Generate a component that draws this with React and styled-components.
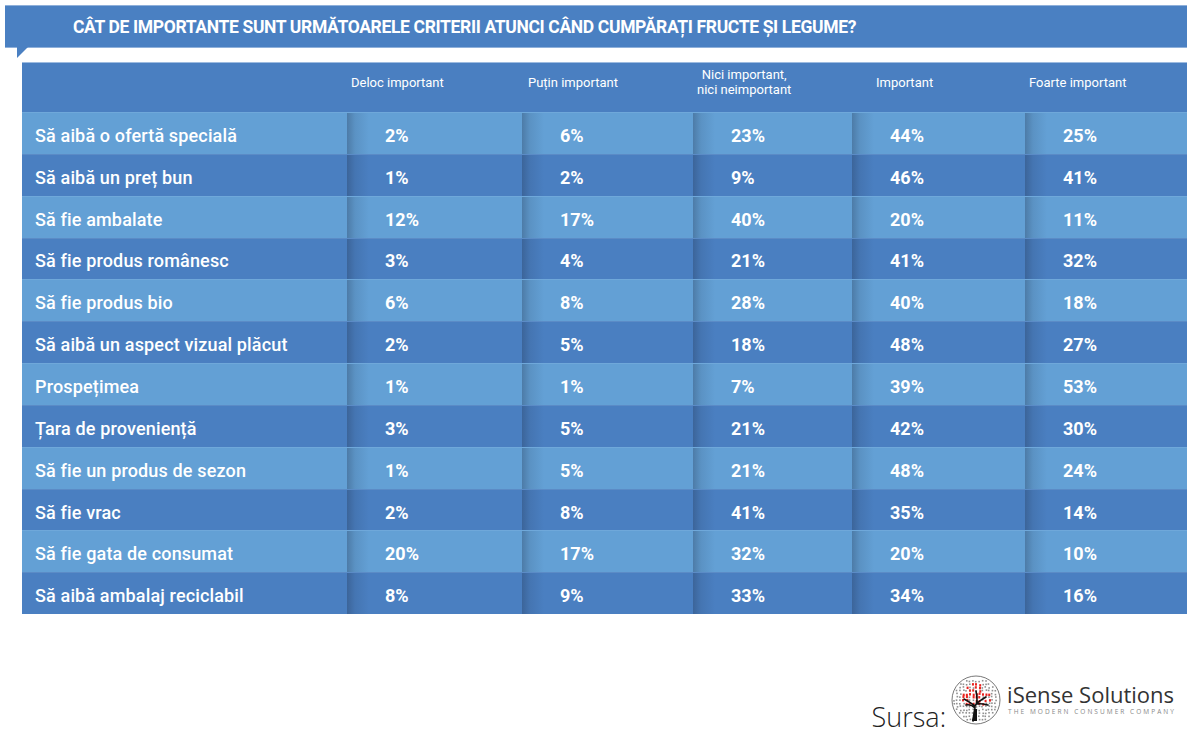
import React from 'react';
import styled, { createGlobalStyle } from 'styled-components';

const GlobalStyle = createGlobalStyle`
  body {
    margin: 0;
    background: #ffffff;
    font-family: Roboto, "Noto Sans", sans-serif;
  }
`;

const columns = [
  { label: 'Deloc important', pad: 4 },
  { label: 'Puțin important', pad: 6 },
  { label: ['Nici important,', 'nici neimportant'], pad: 4 },
  { label: 'Important', pad: 24 },
  { label: 'Foarte important', pad: 4 },
];

const widths = '325px 175px 171px 159px 173px 162px';

const rows = [
  ['Să aibă o ofertă specială', 2, 6, 23, 44, 25],
  ['Să aibă un preț bun', 1, 2, 9, 46, 41],
  ['Să fie ambalate', 12, 17, 40, 20, 11],
  ['Să fie produs românesc', 3, 4, 21, 41, 32],
  ['Să fie produs bio', 6, 8, 28, 40, 18],
  ['Să aibă un aspect vizual plăcut', 2, 5, 18, 48, 27],
  ['Prospețimea', 1, 1, 7, 39, 53],
  ['Țara de proveniență', 3, 5, 21, 42, 30],
  ['Să fie un produs de sezon', 1, 5, 21, 48, 24],
  ['Să fie vrac', 2, 8, 41, 35, 14],
  ['Să fie gata de consumat', 20, 17, 32, 20, 10],
  ['Să aibă ambalaj reciclabil', 8, 9, 33, 34, 16],
];

const App = () => {
  return (
    <Page>
      <GlobalStyle />
      <Banner>
        <Title>CÂT DE IMPORTANTE SUNT URMĂTOARELE CRITERII ATUNCI CÂND CUMPĂRAȚI FRUCTE ȘI LEGUME?</Title>
      </Banner>
      <Table>
        <HeadRow>
          <HeadCell />
          {columns.map((c, i) => (
            <HeadCell key={i} $pad={c.pad}>
              <HeadText>
                {Array.isArray(c.label)
                  ? c.label.map((l) => <div key={l}>{l}</div>)
                  : c.label}
              </HeadText>
            </HeadCell>
          ))}
        </HeadRow>
        {rows.map((r, i) => (
          <Row key={r[0]} $light={i % 2 === 0}>
            <LabelCell>{r[0]}</LabelCell>
            {r.slice(1).map((v, j) => (
              <ValueCell key={j}>{v}%</ValueCell>
            ))}
          </Row>
        ))}
      </Table>
      <Footer>
        <Source>Sursa:</Source>
        <Logo />
        <Brand>
          <BrandName>iSense Solutions</BrandName>
          <BrandTag>THE MODERN CONSUMER COMPANY</BrandTag>
        </Brand>
      </Footer>
    </Page>
  );
};

export default App;

// tree logo: grey dotted disc, red canopy, black trunk
const Logo = () => {
  const dots = [];
  let seed = 7;
  const rnd = () => {
    seed = (seed * 9301 + 49297) % 233280;
    return seed / 233280;
  };
  for (let y = -22; y <= 22; y += 3.2) {
    for (let x = -22; x <= 22; x += 3.2) {
      const jx = x + (rnd() - 0.5) * 1.4;
      const jy = y + (rnd() - 0.5) * 1.4;
      const d = Math.sqrt(jx * jx + jy * jy);
      if (d > 22) continue;
      const inCanopy = jy < 6 && Math.sqrt(jx * jx + (jy + 4) * (jy + 4) * 1.4) < 15;
      const red = inCanopy && rnd() > 0.35;
      dots.push(
        <rect
          key={`${x}-${y}`}
          x={25 + jx - 0.9}
          y={25 + jy - 0.9}
          width={red ? 2 : 1.6}
          height={red ? 2.4 : 1.6}
          fill={red ? '#e8231f' : '#6a6a6a'}
          opacity={red ? 1 : 0.75}
        />
      );
    }
  }
  return (
    <LogoSvg viewBox="0 0 50 50" width="50" height="50">
      <circle cx="25" cy="25" r="24" fill="#fff" stroke="#555" strokeWidth="0.8" />
      {dots}
      <path
        d="M22 46 C23 40 24 36 24 31 C20 28 17 26 13 24 M24 31 C26 27 30 25 35 22 M24 33 C21 30 19 29 15 30 M25 30 C27 26 26 21 25 16 M26 29 C30 28 33 29 37 30"
        stroke="#111"
        strokeWidth="1.6"
        fill="none"
        strokeLinecap="round"
      />
      <path d="M21 46 L23 34 L26 34 L26 46 Z" fill="#111" />
    </LogoSvg>
  );
};

const Page = styled.div`
  width: 1200px;
  height: 750px;
  display: flex;
  flex-direction: column;
  padding-top: 5px;
  box-sizing: border-box;
`;

const Banner = styled.div`
  position: relative;
  margin: 0 13px 0 5px;
  height: 43px;
  box-sizing: border-box;
  background: #4a80c2;
  border-top: 1px solid #8fb0da;
  border-bottom: 1px solid #8fb0da;
  display: flex;
  align-items: center;
  padding-left: 68px;

  &::after {
    content: '';
    position: absolute;
    left: 12px;
    bottom: -11px;
    width: 11px;
    height: 11px;
    background: #4a80c2;
    clip-path: polygon(0 0, 100% 0, 0 100%);
  }
`;

const Title = styled.h1`
  margin: 0;
  color: #ffffff;
  font-family: Roboto, "Noto Sans", sans-serif;
  font-size: 17.5px;
  font-weight: 700;
  letter-spacing: -0.35px;
  white-space: nowrap;
`;

const Table = styled.div`
  margin: 14px 13px 0 22px;
  display: flex;
  flex-direction: column;
`;

const HeadRow = styled.div`
  display: grid;
  grid-template-columns: ${widths};
  height: 50px;
  background: #4a7fc1;
  border-top: 1px solid #9dbbe0;
  box-sizing: border-box;
`;

const HeadCell = styled.div`
  display: flex;
  align-items: center;
  padding: 0 0 11px ${(p) => p.$pad || 0}px;
`;

const HeadText = styled.div`
  color: #ffffff;
  font-family: Roboto, "Noto Sans", sans-serif;
  font-size: 13px;
  line-height: 15px;
  text-align: center;
`;

const Row = styled.div`
  display: grid;
  grid-template-columns: ${widths};
  height: 41.85px;
  box-sizing: border-box;
  padding-top: 4px;
  background: ${(p) => (p.$light ? '#63a0d5' : '#4a7fc1')};
  border-top: 1px solid ${(p) => (p.$light ? '#6fa8da' : '#5b8bc6')};
`;

const LabelCell = styled.div`
  display: flex;
  align-items: center;
  padding-left: 13px;
  color: #ffffff;
  font-family: Roboto, "Noto Sans", sans-serif;
  font-size: 18px;
  font-weight: 500;
  letter-spacing: 0.15px;
`;

const ValueCell = styled.div`
  display: flex;
  align-items: center;
  margin-top: -4px;
  padding: 4px 0 0 38px;
  color: #ffffff;
  font-family: Roboto, "Noto Sans", sans-serif;
  font-size: 18px;
  font-weight: 700;
  background-image: linear-gradient(
    to right,
    rgba(30, 45, 70, 0.32),
    rgba(30, 45, 70, 0.12) 8px,
    rgba(30, 45, 70, 0) 22px
  );
`;

const Footer = styled.div`
  margin-top: auto;
  margin-bottom: 25px;
  margin-right: 24px;
  display: flex;
  align-items: center;
  justify-content: flex-end;
`;

const Source = styled.span`
  align-self: flex-end;
  margin-right: 5px;
  margin-bottom: -10px;
  color: #222;
  font-family: "Open Sans", sans-serif;
  font-size: 27px;
  font-weight: 300;
`;

const LogoSvg = styled.svg`
  display: block;
  margin-right: 6px;
`;

const Brand = styled.div`
  display: flex;
  flex-direction: column;
  margin-top: -4px;
`;

const BrandName = styled.span`
  color: #333;
  font-family: "Open Sans", sans-serif;
  font-size: 22px;
  line-height: 26px;
`;

const BrandTag = styled.span`
  color: #888;
  font-family: "Open Sans", sans-serif;
  font-size: 6.5px;
  letter-spacing: 2.05px;
  margin-left: 1px;
`;
